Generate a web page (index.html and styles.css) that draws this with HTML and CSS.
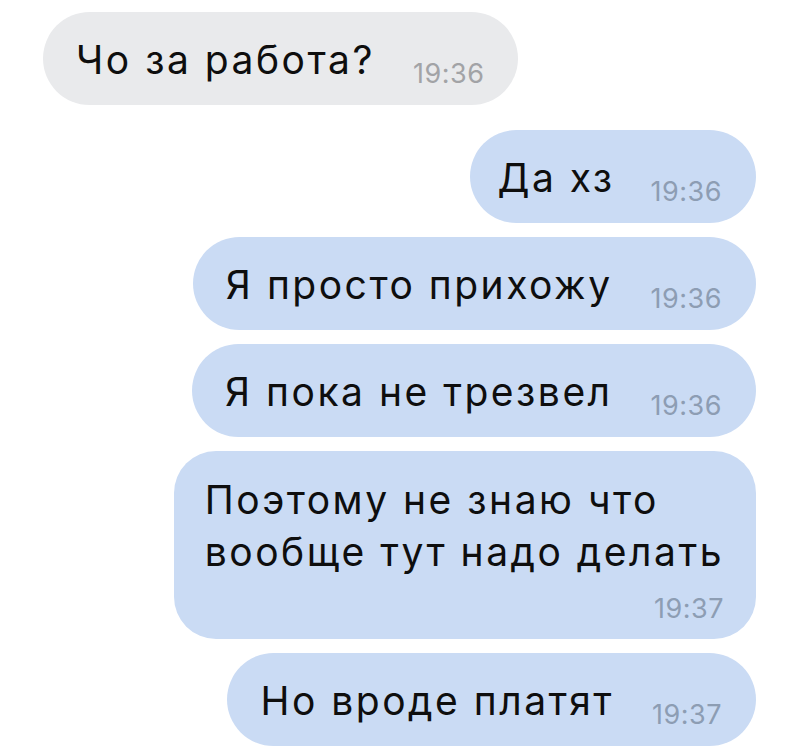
FILE: index.html
```html
<!DOCTYPE html>
<html lang="ru">
<head>
    <meta charset="UTF-8">
    <meta name="viewport" content="width=device-width, initial-scale=1.0">
    <title>Чат</title>
    <link rel="stylesheet" href="styles.css">
</head>
<body>
    <div class="chat">
        <div class="msg msg-in">
            <span class="text">Чо за работа?</span><span class="time">19:36</span>
        </div>
        <div class="msg msg-out msg-first">
            <span class="text">Да хз</span><span class="time">19:36</span>
        </div>
        <div class="msg msg-out">
            <span class="text">Я просто прихожу</span><span class="time">19:36</span>
        </div>
        <div class="msg msg-out">
            <span class="text">Я пока не трезвел</span><span class="time">19:36</span>
        </div>
        <div class="msg msg-out msg-long">
            <div class="text">Поэтому не знаю что<br>вообще тут надо делать</div>
            <div class="time">19:37</div>
        </div>
        <div class="msg msg-out">
            <span class="text">Но вроде платят</span><span class="time">19:37</span>
        </div>
    </div>
</body>
</html>
```

FILE: styles.css
```css
body {
    margin: 0;
    background: #ffffff;
    font-family: Inter, "Liberation Sans", Arial, sans-serif;
    color: #0e0e0e;
}
.chat {
    display: flex;
    flex-direction: column;
    gap: 14px;
    padding: 12px 34px 0 43px;
}
.msg {
    padding: 22px 34px 19px 33px;
    border-radius: 47px;
    font-size: 39px;
    line-height: 52px;
    white-space: nowrap;
}
.msg-in {
    align-self: flex-start;
    background: #e9eaec;
}
.msg-out {
    align-self: flex-end;
    background: #cadbf4;
}
.msg-first {
    margin-top: 11px;
    padding-left: 28px;
}
.text {
    letter-spacing: 2.5px;
}
.time {
    display: inline-block;
    margin-left: 38px;
    font-size: 27px;
    letter-spacing: 0.5px;
    line-height: 20px;
    vertical-align: -9px;
    color: #8d9db3;
}
.msg-in .time {
    color: #a2a3a6;
}
.msg-first .time {
    margin-left: 36px;
}
.msg-long {
    padding: 23px 32px 10px 31px;
    border-radius: 42px;
}
.msg-long .time {
    display: block;
    text-align: right;
    margin: 11px 0 0;
    line-height: 40px;
    vertical-align: baseline;
}
```
